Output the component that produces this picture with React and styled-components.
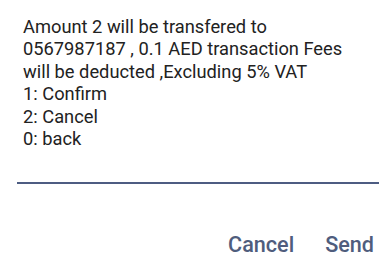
import React from 'react'
import styled, { createGlobalStyle } from 'styled-components'

const GlobalStyle = createGlobalStyle`
  html, body {
    margin: 0;
    padding: 0;
    background: #ffffff;
  }
  body {
    font-family: Roboto, "Noto Sans", sans-serif;
  }
`

const Dialog = styled.div`
  width: 392px;
  height: 269px;
  box-sizing: border-box;
  padding: 16px 13px 0 17px;
  display: flex;
  flex-direction: column;
`

const Message = styled.div`
  padding-left: 6px;
  font-size: 18.3px;
  line-height: 22.4px;
  color: #222222;
  white-space: pre-line;
`

const Input = styled.div`
  margin-top: 32px;
  height: 2px;
  background: #4d5c82;
`

const Actions = styled.div`
  display: flex;
  justify-content: flex-end;
  gap: 31px;
  margin-top: 48px;
  padding-right: 5px;
`

const ActionButton = styled.button`
  border: none;
  background: none;
  padding: 0;
  font-family: Roboto, "Noto Sans", sans-serif;
  font-size: 21.6px;
  font-weight: 500;
  color: #4f5d7d;
  cursor: pointer;
`

const text = `Amount 2 will be transfered to
0567987187 , 0.1 AED transaction Fees
will be deducted ,Excluding 5% VAT
1: Confirm
2: Cancel
0: back`

export default function App() {
  return (
    <>
      <GlobalStyle />
      <Dialog>
        <Message>{text}</Message>
        <Input />
        <Actions>
          <ActionButton>Cancel</ActionButton>
          <ActionButton>Send</ActionButton>
        </Actions>
      </Dialog>
    </>
  )
}
